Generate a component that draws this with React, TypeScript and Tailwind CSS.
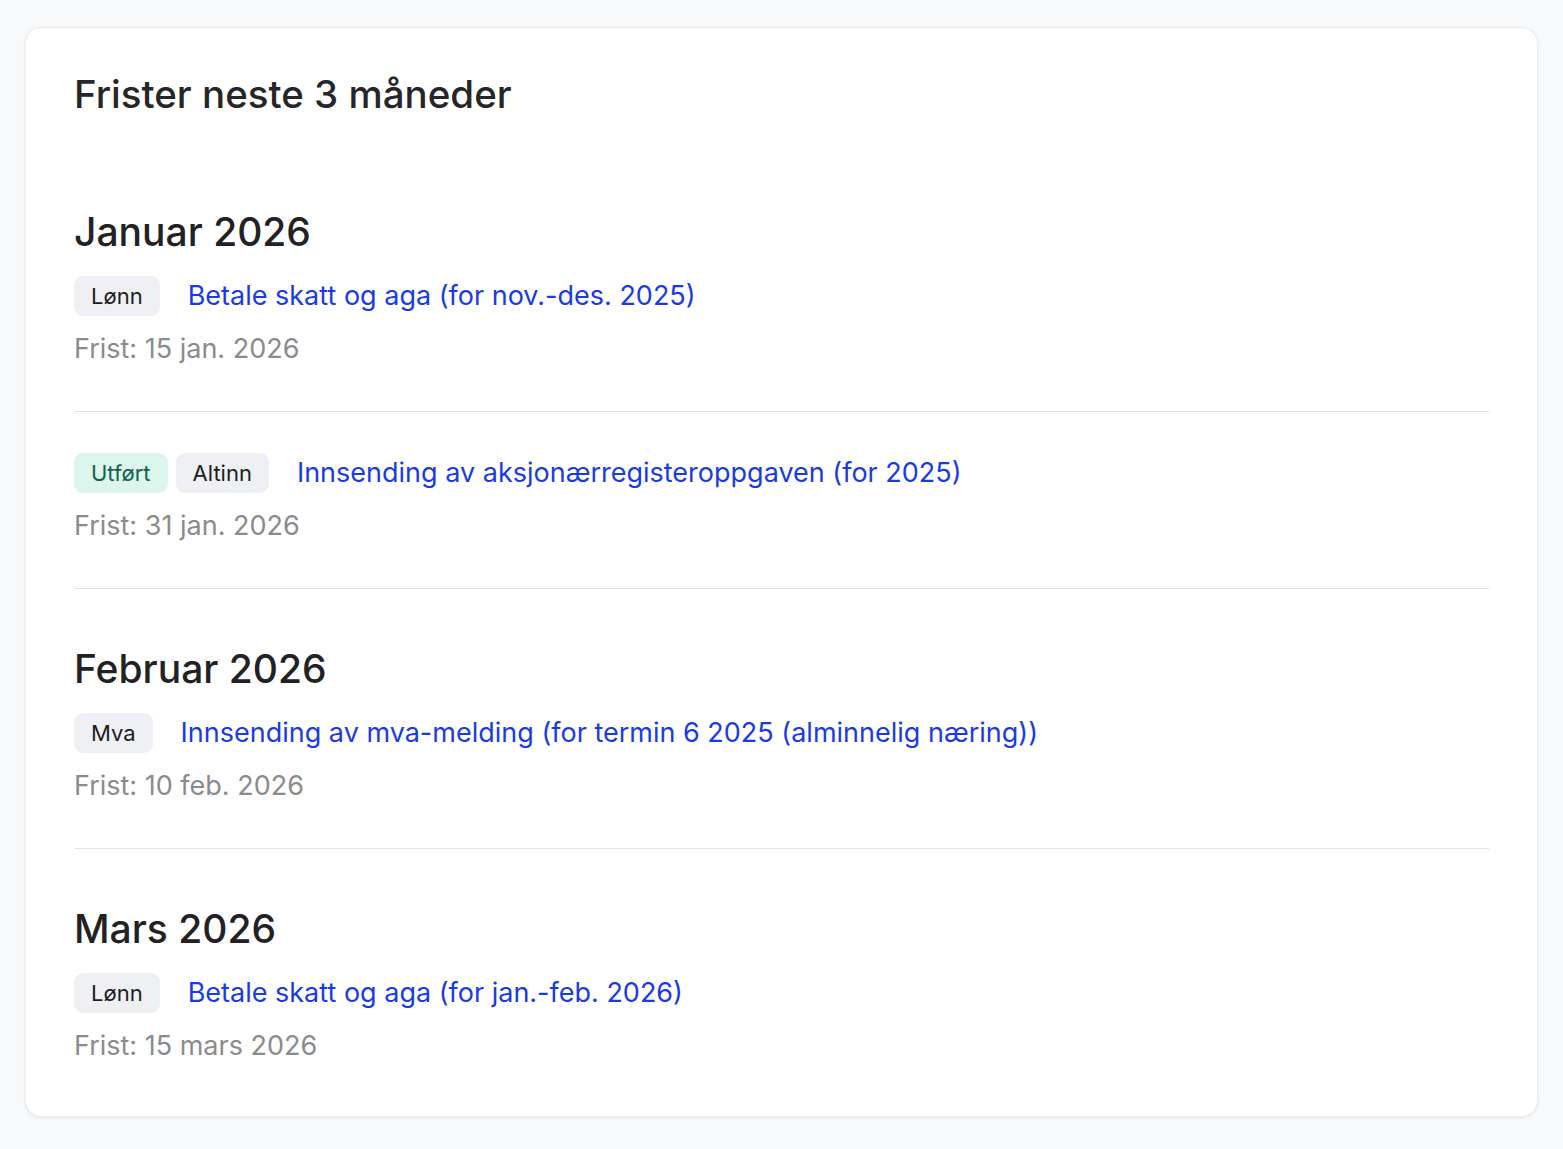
import React from "react";

type Tag = { label: string; tone?: "gray" | "green" };

type Deadline = {
  month?: string;
  tags: Tag[];
  title: string;
  due: string;
};

const deadlines: Deadline[] = [
  {
    month: "Januar 2026",
    tags: [{ label: "Lønn" }],
    title: "Betale skatt og aga (for nov.-des. 2025)",
    due: "Frist: 15 jan. 2026",
  },
  {
    tags: [{ label: "Utført", tone: "green" }, { label: "Altinn" }],
    title: "Innsending av aksjonærregisteroppgaven (for 2025)",
    due: "Frist: 31 jan. 2026",
  },
  {
    month: "Februar 2026",
    tags: [{ label: "Mva" }],
    title: "Innsending av mva-melding (for termin 6 2025 (alminnelig næring))",
    due: "Frist: 10 feb. 2026",
  },
  {
    month: "Mars 2026",
    tags: [{ label: "Lønn" }],
    title: "Betale skatt og aga (for jan.-feb. 2026)",
    due: "Frist: 15 mars 2026",
  },
];

function Badge({ tag }: { tag: Tag }) {
  const green = tag.tone === "green";
  return (
    <span
      className={`inline-flex h-10 items-center rounded-[9px] px-[17px] text-[22px] ${
        green ? "bg-[#dcf5ed] text-[#10634a]" : "bg-[#eef0f3] text-[#1d1d1f]"
      }`}
    >
      {tag.label}
    </span>
  );
}

function DeadlineRow({ item, last }: { item: Deadline; last: boolean }) {
  return (
    <div
      className={`pb-11 ${item.month ? "pt-14" : "pt-[41px]"} ${
        last ? "" : "border-b border-[#e4e4e6]"
      }`}
    >
      {item.month && (
        <h3 className="mb-5 text-[39px] font-medium leading-[48px] text-[#222224]">
          {item.month}
        </h3>
      )}
      <div className="flex items-center">
        <div className="flex gap-2">
          {item.tags.map((t) => (
            <Badge key={t.label} tag={t} />
          ))}
        </div>
        <a href="#" className="ml-7 text-[27px] leading-9 text-[#1a3be3]">
          {item.title}
        </a>
      </div>
      <p className="mt-[15px] text-[27px] leading-9 text-[#8b8b8d]">{item.due}</p>
    </div>
  );
}

export default function App() {
  return (
    <main
      className="min-h-screen bg-[#f8f9fb] px-[25px] pt-[27px] pb-8"
      style={{ fontFamily: "Inter, 'Noto Sans', sans-serif" }}
    >
      <section className="rounded-2xl border border-[#ededf0] bg-white px-12 pt-[46px] pb-2 shadow-[0_1px_3px_rgba(0,0,0,0.08)]">
        <h2 className="text-[38.5px] font-medium leading-10 text-[#262628]">
          Frister neste 3 måneder
        </h2>
        <div className="mt-[38px]">
          {deadlines.map((d, i) => (
            <DeadlineRow key={i} item={d} last={i === deadlines.length - 1} />
          ))}
        </div>
      </section>
    </main>
  );
}
